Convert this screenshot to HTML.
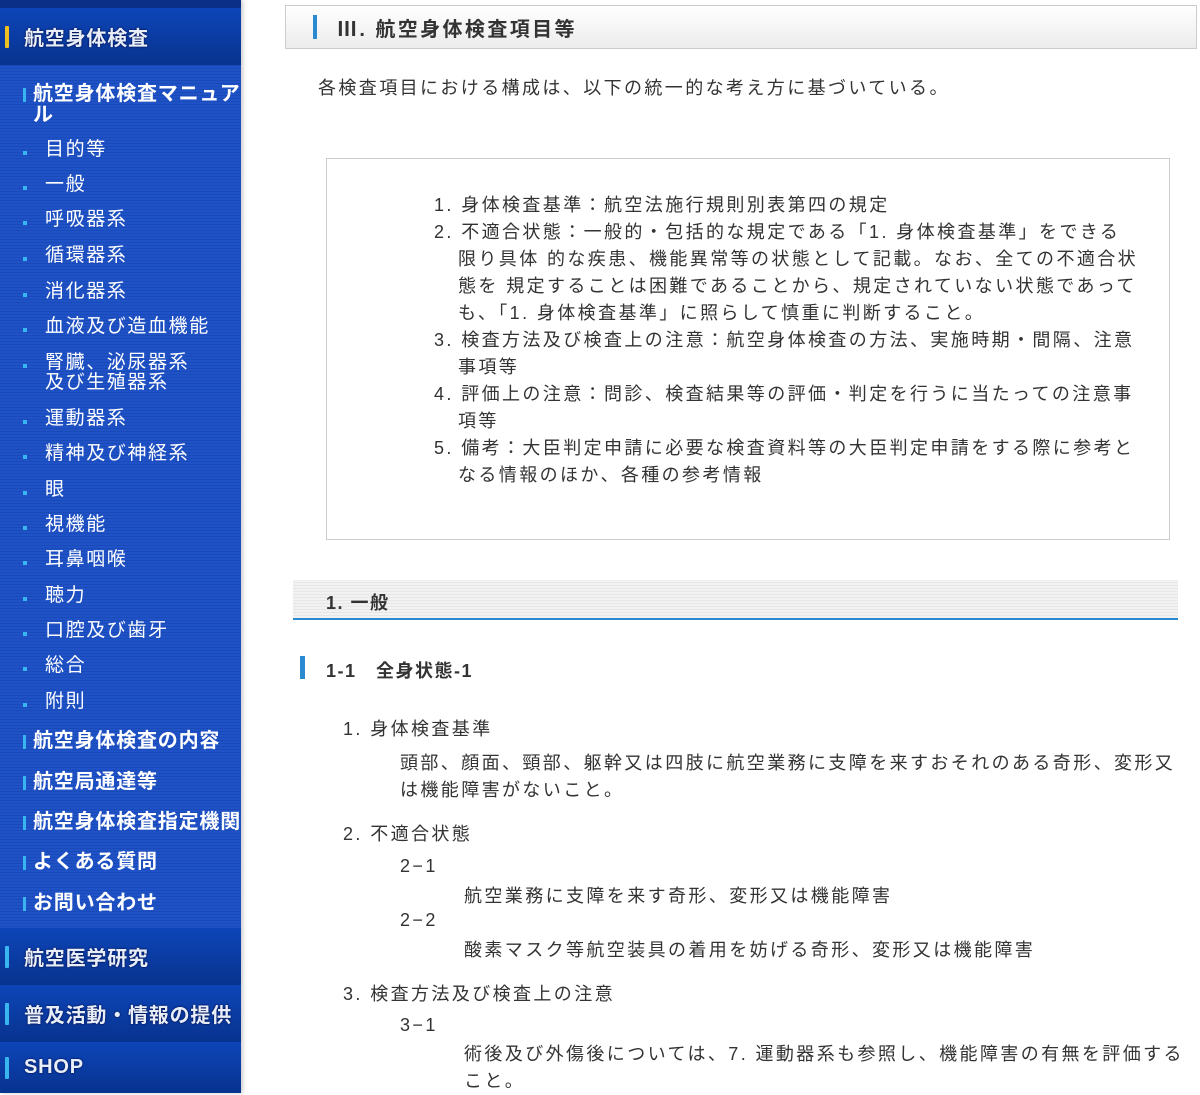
<!DOCTYPE html>
<html><head><meta charset="utf-8"><style>
*{margin:0;padding:0;box-sizing:border-box}
body{width:1200px;height:1093px;overflow:hidden;background:#fff;font-family:"Liberation Sans","Noto Sans CJK JP",sans-serif;color:#333;position:relative}
.side{position:absolute;left:0;top:0;width:241px;height:1093px;background:repeating-linear-gradient(#1f52c6 0 2px,#1a4ab8 2px 3px);box-shadow:2px 0 4px #ccc}
.hd{position:absolute;left:0;width:241px;background:linear-gradient(#0d45b8,#08338f);color:#e8eef8;font-weight:bold;font-size:20px;letter-spacing:0.8px;padding-left:24px;display:flex;align-items:center;text-shadow:0 0 2px #003}
.hd:before{content:"";position:absolute;left:5px;width:4px;height:22px;background:#39b6f0;border-radius:1px}
.hd.y:before{background:#f0c020}
.s{position:absolute;left:33px;color:#fff;font-weight:bold;font-size:20px;line-height:21px;letter-spacing:0.8px;white-space:nowrap}
.s:before{content:"";position:absolute;left:-10px;top:4px;width:3px;height:14px;background:#39b6f0}
.i{position:absolute;left:45px;color:#fff;font-size:19px;line-height:20px;letter-spacing:1.6px}
.i:before{content:"";position:absolute;left:-22px;top:11px;width:4px;height:4px;background:#39b6f0}
.t{position:absolute;font-size:18px;color:#333;letter-spacing:2.4px}
</style></head><body>
<div class="side">
<div style="position:absolute;top:0;left:0;width:241px;height:8px;background:#0b2f86"></div>
<div class="hd y" style="top:8px;height:57px">航空身体検査</div>
<div class="s" style="top:84px;white-space:normal;width:208px">航空身体検査マニュアル</div>
<div class="i" style="top:140px">目的等</div>
<div class="i" style="top:175px">一般</div>
<div class="i" style="top:210px">呼吸器系</div>
<div class="i" style="top:246px">循環器系</div>
<div class="i" style="top:282px">消化器系</div>
<div class="i" style="top:317px">血液及び造血機能</div>
<div class="i" style="top:353px">腎臓、泌尿器系<br>及び生殖器系</div>
<div class="i" style="top:409px">運動器系</div>
<div class="i" style="top:444px">精神及び神経系</div>
<div class="i" style="top:480px">眼</div>
<div class="i" style="top:515px">視機能</div>
<div class="i" style="top:550px">耳鼻咽喉</div>
<div class="i" style="top:586px">聴力</div>
<div class="i" style="top:621px">口腔及び歯牙</div>
<div class="i" style="top:656px">総合</div>
<div class="i" style="top:692px">附則</div>
<div class="s" style="top:731px">航空身体検査の内容</div>
<div class="s" style="top:772px">航空局通達等</div>
<div class="s" style="top:812px">航空身体検査指定機関</div>
<div class="s" style="top:852px">よくある質問</div>
<div class="s" style="top:893px">お問い合わせ</div>
<div class="hd" style="top:928px;height:57px">航空医学研究</div>
<div class="hd" style="top:985px;height:57px">普及活動・情報の提供</div>
<div class="hd" style="top:1042px;height:51px">SHOP</div>
</div>

<div style="position:absolute;left:285px;top:5px;width:912px;height:44px;border:1px solid #ccc;background:linear-gradient(#fff,#ececec)"></div>
<div style="position:absolute;left:313px;top:15px;width:4px;height:24px;background:#2a8ad0"></div>
<div class="t" style="left:337px;top:13px;font-size:20px;font-weight:bold;letter-spacing:2.4px">Ⅲ. 航空身体検査項目等</div>
<div class="t" style="left:318px;top:74px">各検査項目における構成は、以下の統一的な考え方に基づいている。</div>

<div style="position:absolute;left:326px;top:158px;width:844px;height:382px;border:1px solid #ccc"></div>
<div class="t" style="left:434px;top:192px;width:705px;line-height:27px">
<div>1. 身体検査基準：航空法施行規則別表第四の規定</div>
<div style="padding-left:24px;text-indent:-24px">2. 不適合状態：一般的・包括的な規定である「1. 身体検査基準」をできる限り具体 的な疾患、機能異常等の状態として記載。なお、全ての不適合状態を 規定することは困難であることから、規定されていない状態であって も、「1. 身体検査基準」に照らして慎重に判断すること。</div>
<div style="padding-left:24px;text-indent:-24px">3. 検査方法及び検査上の注意：航空身体検査の方法、実施時期・間隔、注意事項等</div>
<div style="padding-left:24px;text-indent:-24px">4. 評価上の注意：問診、検査結果等の評価・判定を行うに当たっての注意事項等</div>
<div style="padding-left:24px;text-indent:-24px">5. 備考：大臣判定申請に必要な検査資料等の大臣判定申請をする際に参考となる情報のほか、各種の参考情報</div>
</div>

<div style="position:absolute;left:293px;top:580px;width:885px;height:40px;background:repeating-linear-gradient(#f2f2f2 0 2px,#e6e6e6 2px 3px);border-bottom:2px solid #2a8ad0"></div>
<div class="t" style="left:326px;top:589px;font-weight:bold;letter-spacing:1.5px">1. 一般</div>
<div style="position:absolute;left:300px;top:656px;width:5px;height:23px;background:#2a8ad0"></div>
<div class="t" style="left:326px;top:657px;font-weight:bold;letter-spacing:1.5px">1-1　全身状態-1</div>
<div class="t" style="left:343px;top:715px">1. 身体検査基準</div>
<div class="t" style="left:400px;top:750px;width:795px;line-height:27px">頭部、顔面、頸部、躯幹又は四肢に航空業務に支障を来すおそれのある奇形、変形又は機能障害がないこと。</div>
<div class="t" style="left:343px;top:820px">2. 不適合状態</div>
<div class="t" style="left:400px;top:856px">2−1</div>
<div class="t" style="left:464px;top:882px">航空業務に支障を来す奇形、変形又は機能障害</div>
<div class="t" style="left:400px;top:910px">2−2</div>
<div class="t" style="left:464px;top:936px">酸素マスク等航空装具の着用を妨げる奇形、変形又は機能障害</div>
<div class="t" style="left:343px;top:980px">3. 検査方法及び検査上の注意</div>
<div class="t" style="left:400px;top:1015px">3−1</div>
<div class="t" style="left:464px;top:1041px;width:725px;line-height:27px">術後及び外傷後については、7. 運動器系も参照し、機能障害の有無を評価すること。</div>
</body></html>
